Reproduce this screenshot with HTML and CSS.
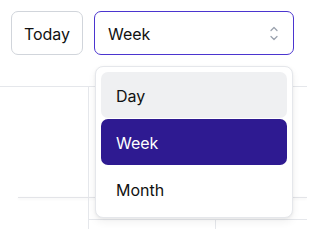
FILE: index.html
```html
<!DOCTYPE html>
<html lang="en">
<head>
<meta charset="utf-8">
<title>Calendar view</title>
<link rel="stylesheet" href="styles.css">
</head>
<body>
<div class="toolbar">
  <button class="btn-today" type="button">Today</button>
  <div class="select-wrap">
    <div class="select">
      <span class="select-value">Week</span>
      <svg class="chevron" width="8" height="15" viewBox="0 0 8 15" aria-hidden="true">
        <path d="M1 4.5 L4 1.5 L7 4.5" fill="none" stroke="#9ca3af" stroke-width="1.3" stroke-linecap="round" stroke-linejoin="round"/>
        <path d="M1 10.5 L4 13.5 L7 10.5" fill="none" stroke="#9ca3af" stroke-width="1.3" stroke-linecap="round" stroke-linejoin="round"/>
      </svg>
    </div>
    <ul class="menu">
      <li class="item item-hover">Day</li>
      <li class="item item-active">Week</li>
      <li class="item">Month</li>
    </ul>
  </div>
</div>
<div class="cal">
  <div class="cal-top"><div class="gutter"></div><div class="fill"></div></div>
  <div class="cal-divider"></div>
  <div class="cal-mid"><div class="gutter"></div><div class="fill"></div></div>
  <div class="cal-row"><div class="gutter"></div><div class="cell"></div><div class="cell-last"></div></div>
</div>
</body>
</html>
```

FILE: styles.css
```css
* { box-sizing: border-box; }
html, body { margin: 0; padding: 0; background: #fff; }
body {
  font-family: Inter, "Noto Sans", "Liberation Sans", sans-serif;
  color: #111111;
  width: 307px;
  height: 229px;
  overflow: hidden;
}
.toolbar {
  display: flex;
  gap: 11px;
  padding: 11px 13px 0 11px;
  height: 55px;
}
.btn-today {
  width: 72px;
  height: 44px;
  border: 1px solid #d1d5db;
  border-radius: 7px;
  background: #fff;
  font-family: inherit;
  font-size: 16px;
  color: #111111;
  padding: 1px 0 0;
}
.select-wrap {
  position: relative;
  width: 200px;
  height: 44px;
}
.select {
  height: 44px;
  border: 1.3px solid #4b35cf;
  border-radius: 7px;
  display: flex;
  align-items: center;
  justify-content: space-between;
  padding: 1px 15px 0 13px;
  font-size: 16px;
}
.chevron { display: block; }
.menu {
  position: absolute;
  top: 55px;
  left: 1px;
  width: 198px;
  margin: 0;
  padding: 5px;
  list-style: none;
  background: #fff;
  border: 1px solid #e5e7eb;
  border-radius: 8px;
  box-shadow: 0 4px 8px rgba(0,0,0,0.06), 0 1px 3px rgba(0,0,0,0.06);
  display: flex;
  flex-direction: column;
  gap: 1px;
  z-index: 2;
}
.item {
  height: 46px;
  display: flex;
  align-items: center;
  padding: 2px 0 0 15px;
  border-radius: 7px;
  font-size: 16px;
  color: #111111;
}
.item-hover { background: #eff0f2; }
.item-active { background: #2e1a91; color: #fff; }
.cal {
  margin-top: 31px;
  border-top: 1px solid #e5e7eb;
}
.cal-top, .cal-mid, .cal-row { display: flex; }
.cal-top { height: 110px; }
.cal-mid { height: 21px; }
.cal-row { height: 20px; }
.gutter {
  width: 89px;
  border-right: 1px solid #e5e7eb;
}
.fill { flex: 1; }
.cal-divider {
  margin-left: 18px;
  height: 1px;
  background: #e3e4e8;
  box-shadow: 0 1px 3px rgba(0,0,0,0.08);
}
.cell {
  width: 127px;
  border-top: 1px solid #e5e7eb;
  border-right: 1px solid #e5e7eb;
}
.cell-last {
  flex: 1;
  border-top: 1px solid #e5e7eb;
}
```
